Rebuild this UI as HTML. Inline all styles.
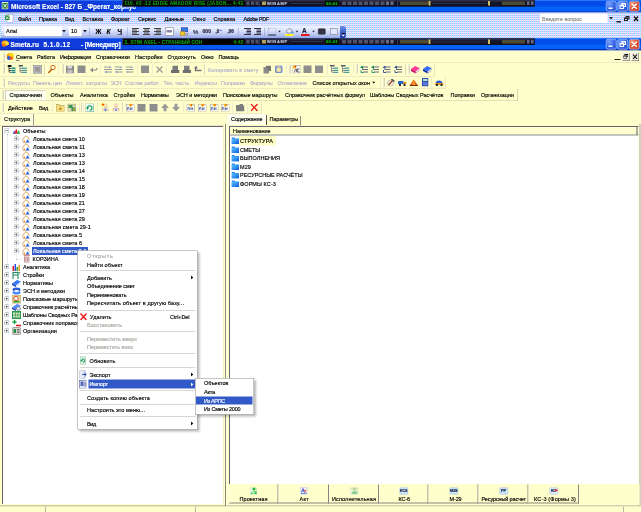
<!DOCTYPE html>
<html><head><meta charset="utf-8"><title>Smeta.ru</title>
<style>
html,body{margin:0;padding:0;background:#ffffcc;overflow:hidden;}
body{width:641px;height:512px;position:relative;}
#root{position:absolute;left:0;top:0;width:1282px;height:1024px;transform:scale(.5);transform-origin:0 0;font-family:"Liberation Sans",sans-serif;overflow:hidden;background:#ffffcc;}
#root div,#root span.t,#root svg{position:absolute;box-sizing:border-box;}
span.t{white-space:pre;-webkit-text-stroke:0.3px currentColor;font-family:"Liberation Sans",sans-serif;}

</style></head><body><div id="root"><div style="left:0px;top:0px;width:1282px;height:25px;background:linear-gradient(90deg,#1236d6 0,#0e3cda 180px,#0650ee 300px,#0458f4 700px,#0458f4 100%);"></div><div style="left:280px;top:2px;width:1002px;height:11px;background:linear-gradient(90deg,rgba(0,30,170,0),rgba(0,30,170,.16) 200px);"></div><div style="left:700px;top:2px;width:582px;height:11px;background:conic-gradient(rgba(0,51,204,.35) 25%,rgba(0,102,255,.35) 0 50%,rgba(0,51,204,.35) 0 75%,rgba(0,102,255,.35) 0) 0 0/4px 4px;"></div><div style="left:280px;top:13px;width:1002px;height:10px;background:linear-gradient(90deg,rgba(0,120,255,0),rgba(0,120,255,.3) 200px);"></div><div style="left:0px;top:0px;width:1282px;height:3px;background:linear-gradient(#3f83ff,rgba(40,110,255,0));"></div><div style="left:0px;top:23px;width:1282px;height:2px;background:#0a2ab0;"></div><svg style="left:3px;top:4px" width="14" height="15" viewBox="0 0 16 17"><rect x="0" y="0" width="16" height="17" fill="#eef8e4"/><rect x="2" y="2" width="12" height="13" fill="#2c8a3c"/><path d="M4.5 4.5 L11.5 12.5 M11.5 4.5 L4.5 12.5" stroke="#fff" stroke-width="2"/><circle cx="12" cy="11" r="1.6" fill="#e04030"/></svg><span class="t" style="left:22px;top:4.5px;font-size:13px;line-height:17px;color:#fff;font-weight:bold;letter-spacing:0.00px;">Microsoft Excel - 827 Б _Фрегат_корпус</span><div style="left:1212px;top:2px;width:21px;height:21px;background:radial-gradient(circle at 30% 25%,#7aa0ff 0,#3a68e8 50%,#2248c8 100%);border:1.5px solid #fff;border-radius:4px;"></div><div style="left:1217px;top:15px;width:8px;height:3px;background:#fff;"></div><div style="left:1235px;top:2px;width:21px;height:21px;background:radial-gradient(circle at 30% 25%,#7aa0ff 0,#3a68e8 50%,#2248c8 100%);border:1.5px solid #fff;border-radius:4px;"></div><div style="left:1243px;top:6px;width:9px;height:8px;border:2px solid #fff;border-top-width:3px;"></div><div style="left:1239px;top:10px;width:9px;height:8px;background:#3a68e8;border:2px solid #fff;border-top-width:3px;"></div><div style="left:1258px;top:2px;width:21px;height:21px;background:radial-gradient(circle at 30% 25%,#f0a080 0,#e0583a 45%,#c43a18 100%);border:1.5px solid #fff;border-radius:4px;"></div><svg style="left:1262px;top:6px" width="13" height="13" viewBox="0 0 13 13"><path d="M2 2 L11 11 M11 2 L2 11" stroke="#fff" stroke-width="2.6" stroke-linecap="round"/></svg><div style="left:0px;top:25px;width:1282px;height:51px;background:conic-gradient(#ffccff 25%,#ccccff 0 50%,#99ccff 0 75%,#ccffff 0) 0 -1px/4px 4px;"></div><div style="left:2px;top:51px;width:690px;height:25px;background:linear-gradient(#f2f5ff 0,#dbe2fc 40%,#bcc8f2 72%,#93a4e2 100%);border-radius:0 4px 4px 0;"></div><div style="left:680px;top:52px;width:12px;height:24px;background:linear-gradient(#6a8ee8,#2038a8);border-radius:0 5px 5px 0;"></div><div style="left:684px;top:66px;width:6px;height:2px;background:#111;"></div><svg style="left:683px;top:69px" width="8" height="5" viewBox="0 0 8 5"><path d="M0 0 L7 0 L3.5 4 Z" fill="#fff"/></svg><svg style="left:10px;top:28px" width="18" height="19" viewBox="0 0 18 19"><rect x="4" y="1" width="12" height="16" fill="#fff" stroke="#8a9ab8"/><rect x="0" y="3" width="9" height="9" fill="#2c8a3c"/><path d="M2 5 L7 10 M7 5 L2 10" stroke="#fff" stroke-width="1.6"/></svg><span class="t" style="left:36px;top:30.5px;font-size:11px;line-height:15px;color:#000;letter-spacing:-0.26px;">Файл</span><span class="t" style="left:78px;top:30.5px;font-size:11px;line-height:15px;color:#000;letter-spacing:-0.20px;">Правка</span><span class="t" style="left:130px;top:30.5px;font-size:11px;line-height:15px;color:#000;letter-spacing:-0.64px;">Вид</span><span class="t" style="left:165px;top:30.5px;font-size:11px;line-height:15px;color:#000;letter-spacing:0.02px;">Вставка</span><span class="t" style="left:222px;top:30.5px;font-size:11px;line-height:15px;color:#000;letter-spacing:-0.18px;">Формат</span><span class="t" style="left:276px;top:30.5px;font-size:11px;line-height:15px;color:#000;letter-spacing:-0.28px;">Сервис</span><span class="t" style="left:329px;top:30.5px;font-size:11px;line-height:15px;color:#000;letter-spacing:-0.12px;">Данные</span><span class="t" style="left:385px;top:30.5px;font-size:11px;line-height:15px;color:#000;letter-spacing:0.11px;">Окно</span><span class="t" style="left:427px;top:30.5px;font-size:11px;line-height:15px;color:#000;letter-spacing:-0.02px;">Справка</span><span class="t" style="left:487px;top:30.5px;font-size:11px;line-height:15px;color:#000;letter-spacing:-0.65px;">Adobe PDF</span><div style="left:1080px;top:27px;width:135px;height:19px;background:#fff;"></div><span class="t" style="left:1084px;top:29.5px;font-size:11px;line-height:15px;color:#8a8a8a;letter-spacing:-0.08px;">Введите вопрос</span><svg style="left:1218px;top:34px" width="9" height="6" viewBox="0 0 9 6"><path d="M0 0 L8 0 L4 5 Z" fill="#222"/></svg><div style="left:1233px;top:42px;width:9px;height:3px;background:#222;"></div><div style="left:1251px;top:32px;width:8px;height:7px;border:2px solid #222;border-top-width:3px;"></div><div style="left:1248px;top:35px;width:8px;height:7px;background:#ccd8fc;border:2px solid #222;border-top-width:3px;"></div><svg style="left:1266px;top:31px" width="13" height="13" viewBox="0 0 13 13"><path d="M2 2 L10 11 M10 2 L2 11" stroke="#111" stroke-width="2.4"/></svg><div style="left:5px;top:56px;width:2px;height:14px;border-left:2px dotted #fff;"></div><div style="left:9px;top:53px;width:115px;height:19px;background:#fff;"></div><span class="t" style="left:12px;top:54.5px;font-size:11px;line-height:15px;color:#000;letter-spacing:-0.00px;">Arial</span><svg style="left:124px;top:60px" width="9" height="6" viewBox="0 0 9 6"><path d="M0 0 L8 0 L4 5 Z" fill="#223"/></svg><div style="left:138px;top:53px;width:25px;height:19px;background:#fff;"></div><span class="t" style="left:142px;top:54.5px;font-size:11px;line-height:15px;color:#000;letter-spacing:-0.12px;">10</span><svg style="left:166px;top:60px" width="9" height="6" viewBox="0 0 9 6"><path d="M0 0 L8 0 L4 5 Z" fill="#223"/></svg><div style="left:178px;top:55px;width:1px;height:18px;background:#8898cc;"></div><span class="t" style="left:191px;top:54.5px;font-size:13px;line-height:17px;color:#000;font-weight:bold;">Ж</span><span class="t" style="left:213px;top:54.5px;font-size:13px;line-height:17px;color:#000;font-weight:bold;font-style:italic;">К</span><span class="t" style="left:235px;top:54.5px;font-size:13px;line-height:17px;color:#000;font-weight:bold;text-decoration:underline;">Ч</span><div style="left:254px;top:55px;width:1px;height:18px;background:#8898cc;"></div><div style="left:264px;top:56px;width:14px;height:2px;background:#444;"></div><div style="left:264px;top:59px;width:10px;height:2px;background:#444;"></div><div style="left:264px;top:62px;width:14px;height:2px;background:#444;"></div><div style="left:264px;top:65px;width:10px;height:2px;background:#444;"></div><div style="left:264px;top:68px;width:14px;height:2px;background:#444;"></div><div style="left:286px;top:56px;width:14px;height:2px;background:#444;"></div><div style="left:288px;top:59px;width:10px;height:2px;background:#444;"></div><div style="left:286px;top:62px;width:14px;height:2px;background:#444;"></div><div style="left:288px;top:65px;width:10px;height:2px;background:#444;"></div><div style="left:286px;top:68px;width:14px;height:2px;background:#444;"></div><div style="left:308px;top:56px;width:14px;height:2px;background:#444;"></div><div style="left:312px;top:59px;width:10px;height:2px;background:#444;"></div><div style="left:308px;top:62px;width:14px;height:2px;background:#444;"></div><div style="left:312px;top:65px;width:10px;height:2px;background:#444;"></div><div style="left:308px;top:68px;width:14px;height:2px;background:#444;"></div><div style="left:330px;top:55px;width:17px;height:16px;background:#fff;border:1px solid #667;"></div><div style="left:333px;top:60px;width:11px;height:5px;background:#88a;"></div><div style="left:362px;top:55px;width:14px;height:9px;background:#3a78e0;border:1px solid #2a4aa0;"></div><div style="left:360px;top:63px;width:10px;height:8px;background:#f0c428;border:1px solid #a8842a;"></div><div style="left:371px;top:66px;width:5px;height:5px;background:#d8d8e8;border:1px solid #667;"></div><span class="t" style="left:386px;top:55.0px;font-size:12px;line-height:16px;color:#223;">%</span><span class="t" style="left:405px;top:56.0px;font-size:10px;line-height:14px;color:#223;font-weight:bold;letter-spacing:0.10px;">000</span><span class="t" style="left:431px;top:56.5px;font-size:9px;line-height:13px;color:#223;font-weight:bold;">,0</span><span class="t" style="left:438px;top:53.0px;font-size:8px;line-height:12px;color:#24c;">←</span><span class="t" style="left:455px;top:56.5px;font-size:9px;line-height:13px;color:#223;font-weight:bold;">,00</span><span class="t" style="left:460px;top:53.0px;font-size:8px;line-height:12px;color:#24c;">→</span><div style="left:477px;top:55px;width:1px;height:18px;background:#8898cc;"></div><div style="left:488px;top:56px;width:14px;height:2px;background:#334;"></div><div style="left:493px;top:59px;width:9px;height:2px;background:#334;"></div><div style="left:493px;top:62px;width:9px;height:2px;background:#334;"></div><div style="left:493px;top:65px;width:9px;height:2px;background:#334;"></div><div style="left:488px;top:68px;width:14px;height:2px;background:#334;"></div><div style="left:508px;top:56px;width:14px;height:2px;background:#334;"></div><div style="left:513px;top:59px;width:9px;height:2px;background:#334;"></div><div style="left:513px;top:62px;width:9px;height:2px;background:#334;"></div><div style="left:513px;top:65px;width:9px;height:2px;background:#334;"></div><div style="left:508px;top:68px;width:14px;height:2px;background:#334;"></div><div style="left:528px;top:55px;width:1px;height:18px;background:#8898cc;"></div><div style="left:536px;top:56px;width:16px;height:15px;border:1px dotted #889;border-bottom:2px solid #223;"></div><svg style="left:556px;top:61px" width="7" height="5" viewBox="0 0 7 5"><path d="M0 0 L6 0 L3 4 Z" fill="#223"/></svg><svg style="left:570px;top:54px" width="18" height="14" viewBox="0 0 18 14"><path d="M2 9 L9 2 L15 8 L8 13 Z" fill="#e8e8f4" stroke="#446"/><circle cx="15" cy="11" r="2" fill="#38c"/></svg><div style="left:570px;top:68px;width:17px;height:4px;background:#ffee22;"></div><svg style="left:591px;top:61px" width="7" height="5" viewBox="0 0 7 5"><path d="M0 0 L6 0 L3 4 Z" fill="#223"/></svg><span class="t" style="left:604px;top:52.5px;font-size:13px;line-height:17px;color:#223;font-weight:bold;">A</span><div style="left:602px;top:68px;width:17px;height:4px;background:#e01818;"></div><svg style="left:624px;top:61px" width="7" height="5" viewBox="0 0 7 5"><path d="M0 0 L6 0 L3 4 Z" fill="#223"/></svg><div style="left:636px;top:57px;width:15px;height:12px;background:#334;border:1px solid #223;border-radius:2px;"></div><div style="left:660px;top:56px;width:15px;height:13px;background:#dfe8ff;border:1px solid #668;"></div><div style="left:0px;top:76px;width:1282px;height:25px;background:linear-gradient(90deg,#1236d6 0,#0e3cda 180px,#0650ee 300px,#0458f4 700px,#0458f4 100%);"></div><div style="left:280px;top:78px;width:1002px;height:11px;background:linear-gradient(90deg,rgba(0,30,170,0),rgba(0,30,170,.16) 200px);"></div><div style="left:700px;top:78px;width:582px;height:11px;background:conic-gradient(rgba(0,51,204,.35) 25%,rgba(0,102,255,.35) 0 50%,rgba(0,51,204,.35) 0 75%,rgba(0,102,255,.35) 0) 0 0/4px 4px;"></div><div style="left:280px;top:89px;width:1002px;height:11px;background:linear-gradient(90deg,rgba(0,120,255,0),rgba(0,120,255,.3) 200px);"></div><div style="left:0px;top:98px;width:1282px;height:3px;background:#0a2ab8;"></div><div style="left:0px;top:76px;width:1282px;height:3px;background:linear-gradient(#3f83ff,rgba(40,110,255,0));"></div><svg style="left:2px;top:80px" width="17" height="15" viewBox="0 0 17 15"><ellipse cx="8" cy="6" rx="7" ry="5" fill="#ffb010"/><ellipse cx="11" cy="7" rx="5" ry="4" fill="#ffd83a"/><ellipse cx="6" cy="10" rx="4" ry="3.5" fill="#ff8000"/></svg><span class="t" style="left:21px;top:80.5px;font-size:13px;line-height:17px;color:#fff;font-weight:bold;letter-spacing:0.17px;">Smeta.ru</span><span class="t" style="left:87px;top:80.5px;font-size:13px;line-height:17px;color:#fff;font-weight:bold;letter-spacing:0.88px;">5.1.0.12</span><span class="t" style="left:162px;top:80.5px;font-size:13px;line-height:17px;color:#fff;font-weight:bold;letter-spacing:-0.27px;">- [Менеджер]</span><div style="left:1212px;top:78px;width:21px;height:21px;background:radial-gradient(circle at 30% 25%,#7aa0ff 0,#3a68e8 50%,#2248c8 100%);border:1.5px solid #fff;border-radius:4px;"></div><div style="left:1217px;top:91px;width:8px;height:3px;background:#fff;"></div><div style="left:1235px;top:78px;width:21px;height:21px;background:radial-gradient(circle at 30% 25%,#7aa0ff 0,#3a68e8 50%,#2248c8 100%);border:1.5px solid #fff;border-radius:4px;"></div><div style="left:1243px;top:82px;width:9px;height:8px;border:2px solid #fff;border-top-width:3px;"></div><div style="left:1239px;top:86px;width:9px;height:8px;background:#3a68e8;border:2px solid #fff;border-top-width:3px;"></div><div style="left:1258px;top:78px;width:21px;height:21px;background:radial-gradient(circle at 30% 25%,#f0a080 0,#e0583a 45%,#c43a18 100%);border:1.5px solid #fff;border-radius:4px;"></div><svg style="left:1262px;top:82px" width="13" height="13" viewBox="0 0 13 13"><path d="M2 2 L11 11 M11 2 L2 11" stroke="#fff" stroke-width="2.6" stroke-linecap="round"/></svg><div style="left:244px;top:0px;width:825px;height:13px;background:#181828;"></div><div style="left:244px;top:0px;width:275px;height:13px;background:linear-gradient(#34344e,#16162a 35%,#101020);border-left:1px solid #50507a;border-right:1px solid #08080e;"></div><div style="left:519px;top:0px;width:275px;height:13px;background:linear-gradient(#34344e,#16162a 35%,#101020);border-left:1px solid #50507a;border-right:1px solid #08080e;"></div><div style="left:794px;top:0px;width:275px;height:13px;background:linear-gradient(#34344e,#16162a 35%,#101020);border-left:1px solid #50507a;border-right:1px solid #08080e;"></div><div style="left:247px;top:1px;width:242px;height:11px;background:#000;"></div><span class="t" style="left:249px;top:0.5px;font-size:9px;line-height:13px;color:#0c9c10;font-weight:bold;letter-spacing:0.73px;">110. #2 -12 EDDIE AMADOR RISE (JASON... 4:43</span><div style="left:493px;top:3px;width:6px;height:7px;background:#50506a;"></div><div style="left:502px;top:3px;width:6px;height:7px;background:#50506a;"></div><div style="left:511px;top:3px;width:6px;height:7px;background:#50506a;"></div><div style="left:524px;top:3px;width:8px;height:7px;background:#b0a060;"></div><span class="t" style="left:534px;top:1.0px;font-size:8px;line-height:12px;color:#c0c0d8;font-weight:bold;letter-spacing:1.45px;">WINAMP</span><div style="left:582px;top:6px;width:64px;height:1px;background:#4a4a6a;"></div><div style="left:650px;top:1px;width:28px;height:11px;background:#001000;"></div><span class="t" style="left:652px;top:1.0px;font-size:8px;line-height:12px;color:#14b418;font-weight:bold;letter-spacing:0.71px;">00:41</span><div style="left:684px;top:3px;width:8px;height:7px;background:#50506a;"></div><div style="left:695px;top:3px;width:8px;height:7px;background:#50506a;"></div><div style="left:706px;top:3px;width:8px;height:7px;background:#50506a;"></div><div style="left:717px;top:3px;width:8px;height:7px;background:#50506a;"></div><div style="left:728px;top:3px;width:8px;height:7px;background:#50506a;"></div><div style="left:739px;top:3px;width:8px;height:7px;background:#50506a;"></div><div style="left:750px;top:3px;width:8px;height:7px;background:#50506a;"></div><div style="left:761px;top:3px;width:8px;height:7px;background:#50506a;"></div><div style="left:772px;top:3px;width:6px;height:7px;background:#6a6a84;"></div><div style="left:781px;top:3px;width:6px;height:7px;background:#6a6a84;"></div><div style="left:800px;top:3px;width:56px;height:7px;background:#4e4a34;"></div><div style="left:857px;top:2px;width:4px;height:9px;background:#d0c060;"></div><div style="left:864px;top:6px;width:110px;height:2px;background:#2c2c46;"></div><div style="left:976px;top:2px;width:4px;height:9px;background:#d0c060;"></div><div style="left:1004px;top:3px;width:46px;height:7px;background:#4e4a34;"></div><div style="left:1054px;top:3px;width:5px;height:7px;background:#6a6a84;"></div><div style="left:1062px;top:3px;width:5px;height:7px;background:#6a6a84;"></div><div style="left:244px;top:77px;width:825px;height:13px;background:#181828;"></div><div style="left:244px;top:77px;width:275px;height:13px;background:linear-gradient(#34344e,#16162a 35%,#101020);border-left:1px solid #50507a;border-right:1px solid #08080e;"></div><div style="left:519px;top:77px;width:275px;height:13px;background:linear-gradient(#34344e,#16162a 35%,#101020);border-left:1px solid #50507a;border-right:1px solid #08080e;"></div><div style="left:794px;top:77px;width:275px;height:13px;background:linear-gradient(#34344e,#16162a 35%,#101020);border-left:1px solid #50507a;border-right:1px solid #08080e;"></div><div style="left:247px;top:78px;width:242px;height:11px;background:#000;"></div><span class="t" style="left:249px;top:77.5px;font-size:9px;line-height:13px;color:#0c9c10;font-weight:bold;letter-spacing:0.60px;">3. STIM AXEL - СТРАННЫЙ СОН                    4:42</span><div style="left:493px;top:80px;width:6px;height:7px;background:#50506a;"></div><div style="left:502px;top:80px;width:6px;height:7px;background:#50506a;"></div><div style="left:511px;top:80px;width:6px;height:7px;background:#50506a;"></div><div style="left:524px;top:80px;width:8px;height:7px;background:#b0a060;"></div><span class="t" style="left:534px;top:78.0px;font-size:8px;line-height:12px;color:#c0c0d8;font-weight:bold;letter-spacing:1.45px;">WINAMP</span><div style="left:582px;top:83px;width:64px;height:1px;background:#4a4a6a;"></div><div style="left:650px;top:78px;width:28px;height:11px;background:#001000;"></div><span class="t" style="left:652px;top:78.0px;font-size:8px;line-height:12px;color:#14b418;font-weight:bold;letter-spacing:0.71px;">00:41</span><div style="left:684px;top:80px;width:8px;height:7px;background:#50506a;"></div><div style="left:695px;top:80px;width:8px;height:7px;background:#50506a;"></div><div style="left:706px;top:80px;width:8px;height:7px;background:#50506a;"></div><div style="left:717px;top:80px;width:8px;height:7px;background:#50506a;"></div><div style="left:728px;top:80px;width:8px;height:7px;background:#50506a;"></div><div style="left:739px;top:80px;width:8px;height:7px;background:#50506a;"></div><div style="left:750px;top:80px;width:8px;height:7px;background:#50506a;"></div><div style="left:761px;top:80px;width:8px;height:7px;background:#50506a;"></div><div style="left:772px;top:80px;width:6px;height:7px;background:#6a6a84;"></div><div style="left:781px;top:80px;width:6px;height:7px;background:#6a6a84;"></div><div style="left:800px;top:80px;width:56px;height:7px;background:#4e4a34;"></div><div style="left:857px;top:79px;width:4px;height:9px;background:#d0c060;"></div><div style="left:864px;top:83px;width:110px;height:2px;background:#2c2c46;"></div><div style="left:976px;top:79px;width:4px;height:9px;background:#d0c060;"></div><div style="left:1004px;top:80px;width:46px;height:7px;background:#4e4a34;"></div><div style="left:1054px;top:80px;width:5px;height:7px;background:#6a6a84;"></div><div style="left:1062px;top:80px;width:5px;height:7px;background:#6a6a84;"></div><div style="left:0px;top:101px;width:1282px;height:923px;background:#ffffcc;"></div><div style="left:6px;top:106px;width:1px;height:18px;background:#b4aa9a;"></div><div style="left:7px;top:106px;width:1px;height:18px;background:#fffff4;"></div><div style="left:9px;top:106px;width:1px;height:18px;background:#b4aa9a;"></div><div style="left:10px;top:106px;width:1px;height:18px;background:#fffff4;"></div><svg style="left:12px;top:104px" width="18" height="18" viewBox="0 0 18 18"><circle cx="8" cy="9" r="7" fill="#ff9a10"/><circle cx="11" cy="7" r="5" fill="#ffd820"/><circle cx="6" cy="12" r="4" fill="#3a62d8"/><circle cx="11" cy="12" r="3" fill="#ff5a10"/></svg><span class="t" style="left:32px;top:106.5px;font-size:11px;line-height:15px;color:#000;letter-spacing:-0.06px;">Смета</span><span class="t" style="left:74px;top:106.5px;font-size:11px;line-height:15px;color:#000;letter-spacing:-0.05px;">Работа</span><span class="t" style="left:120px;top:106.5px;font-size:11px;line-height:15px;color:#000;letter-spacing:-0.54px;">Информация</span><span class="t" style="left:192px;top:106.5px;font-size:11px;line-height:15px;color:#000;letter-spacing:0.12px;">Справочники</span><span class="t" style="left:270px;top:106.5px;font-size:11px;line-height:15px;color:#000;letter-spacing:0.12px;">Настройки</span><span class="t" style="left:335px;top:106.5px;font-size:11px;line-height:15px;color:#000;letter-spacing:0.39px;">Отдохнуть</span><span class="t" style="left:402px;top:106.5px;font-size:11px;line-height:15px;color:#000;letter-spacing:-0.14px;">Окно</span><span class="t" style="left:437px;top:106.5px;font-size:11px;line-height:15px;color:#000;letter-spacing:-0.25px;">Помощь</span><div style="left:32px;top:121px;width:7px;height:1px;background:#000;"></div><div style="left:1229px;top:118px;width:12px;height:2px;background:#222;"></div><div style="left:1244px;top:105px;width:15px;height:17px;background:#ece9d8;border:1px solid #555;border-left-color:#fff;border-top-color:#fff;"></div><div style="left:1249px;top:108px;width:7px;height:6px;border:1px solid #000;border-top-width:2px;"></div><div style="left:1247px;top:111px;width:7px;height:6px;background:#ece9d8;border:1px solid #000;border-top-width:2px;"></div><div style="left:1262px;top:105px;width:16px;height:17px;background:#ece9d8;border:1px solid #555;border-left-color:#fff;border-top-color:#fff;"></div><svg style="left:1265px;top:108px" width="10" height="11" viewBox="0 0 10 11"><path d="M1 1 L9 10 M9 1 L1 10" stroke="#000" stroke-width="2.2"/></svg><div style="left:0px;top:125px;width:1282px;height:1px;background:#e0d2b4;"></div><div style="left:0px;top:152px;width:870px;height:1px;background:#e0d2b4;"></div><div style="left:0px;top:177px;width:892px;height:1px;background:#e0d2b4;"></div><div style="left:0px;top:227px;width:523px;height:1px;background:#e0d2b4;"></div><div style="left:6px;top:129px;width:1px;height:18px;background:#b4aa9a;"></div><div style="left:7px;top:129px;width:1px;height:18px;background:#fffff4;"></div><div style="left:9px;top:129px;width:1px;height:18px;background:#b4aa9a;"></div><div style="left:10px;top:129px;width:1px;height:18px;background:#fffff4;"></div><svg style="left:15px;top:130px" width="17" height="17" viewBox="0 0 17 17"><rect x="0" y="0" width="8" height="4" fill="#111"/><path d="M3 4 V14 M3 7 H8 M3 11 H8 M3 14.5 H8" stroke="#111" stroke-width="1.4" fill="none"/><rect x="8" y="5" width="8" height="3" fill="#1a8a8a"/><rect x="8" y="9.5" width="8" height="3" fill="#1a8a8a"/><rect x="8" y="13.5" width="8" height="3" fill="#1a8a8a"/></svg><svg style="left:37px;top:130px" width="17" height="17" viewBox="0 0 17 17"><rect x="0" y="0" width="9" height="3" fill="#556"/><path d="M3 3 V14 M3 7 H8 M3 11 H8 M3 14.5 H8" stroke="#667" stroke-width="1.4" fill="none"/><rect x="7" y="5" width="10" height="2.5" fill="#4a9a9a"/><rect x="7" y="9.5" width="10" height="2.5" fill="#4a9a9a"/><rect x="7" y="13.5" width="10" height="2.5" fill="#4a9a9a"/></svg><div style="left:60px;top:129px;width:1px;height:20px;background:#bfb296;"></div><div style="left:61px;top:129px;width:1px;height:20px;background:#fffff0;"></div><div style="left:66px;top:130px;width:18px;height:17px;background:#b8b8b8;border:1px solid #999;"></div><div style="left:70px;top:134px;width:10px;height:9px;background:#9a9a9a;"></div><div style="left:89px;top:129px;width:1px;height:20px;background:#bfb296;"></div><div style="left:90px;top:129px;width:1px;height:20px;background:#fffff0;"></div><svg style="left:96px;top:129px" width="16" height="18" viewBox="0 0 16 18"><circle cx="10" cy="6" r="4.5" fill="#fff8e0" stroke="#d86a10" stroke-width="2"/><path d="M7 10 L1.5 16" stroke="#b85a08" stroke-width="3" stroke-linecap="round"/></svg><div style="left:116px;top:129px;width:1px;height:20px;background:#bfb296;"></div><div style="left:117px;top:129px;width:1px;height:20px;background:#fffff0;"></div><div style="left:124px;top:129px;width:1px;height:18px;background:#b4aa9a;"></div><div style="left:125px;top:129px;width:1px;height:18px;background:#fffff4;"></div><div style="left:127px;top:129px;width:1px;height:18px;background:#b4aa9a;"></div><div style="left:128px;top:129px;width:1px;height:18px;background:#fffff4;"></div><svg style="left:132px;top:131px" width="16" height="16" viewBox="0 0 16 16"><rect x="0" y="0" width="16" height="16" fill="#8a8a8a"/><rect x="3" y="1" width="9" height="5" fill="#d8d8d8"/><rect x="3" y="9" width="10" height="7" fill="#c4c4c4"/></svg><div style="left:155px;top:131px;width:16px;height:15px;background:#8e8e8e;"></div><svg style="left:180px;top:131px" width="16" height="16" viewBox="0 0 16 16"><path d="M2 9 H11 Q14 9 14 5" stroke="#8a8a8a" stroke-width="2.4" fill="none"/><path d="M0 9 L6 4 V14 Z" fill="#8a8a8a"/></svg><div style="left:200px;top:129px;width:1px;height:20px;background:#bfb296;"></div><div style="left:201px;top:129px;width:1px;height:20px;background:#fffff0;"></div><svg style="left:208px;top:131px" width="17" height="16" viewBox="0 0 17 16"><path d="M0 3 H9 M0 8 H16 M6 13 H16" stroke="#9a9a9a" stroke-width="2.4"/><path d="M10 1 L16 3.5 L10 6 Z M6 10.5 L0 13 L6 15.5Z" fill="#8a9ac8"/></svg><svg style="left:229px;top:131px" width="17" height="16" viewBox="0 0 17 16"><path d="M0 3 H9 M0 8 H16 M6 13 H16" stroke="#9a9a9a" stroke-width="2.4"/><path d="M10 1 L16 3.5 L10 6 Z M6 10.5 L0 13 L6 15.5Z" fill="#8a9ac8"/></svg><svg style="left:251px;top:131px" width="17" height="16" viewBox="0 0 17 16"><path d="M0 3 H9 M0 8 H16 M6 13 H16" stroke="#9a9a9a" stroke-width="2.4"/><path d="M10 1 L16 3.5 L10 6 Z M6 10.5 L0 13 L6 15.5Z" fill="#8a9ac8"/></svg><div style="left:274px;top:129px;width:1px;height:20px;background:#bfb296;"></div><div style="left:275px;top:129px;width:1px;height:20px;background:#fffff0;"></div><div style="left:282px;top:131px;width:16px;height:15px;background:#8e8e8e;"></div><div style="left:304px;top:129px;width:1px;height:20px;background:#bfb296;"></div><div style="left:305px;top:129px;width:1px;height:20px;background:#fffff0;"></div><svg style="left:312px;top:131px" width="15" height="16" viewBox="0 0 15 16"><path d="M1 2 L13 14 M13 2 L1 14" stroke="#9a9a9a" stroke-width="2.6"/></svg><div style="left:332px;top:129px;width:1px;height:20px;background:#bfb296;"></div><div style="left:333px;top:129px;width:1px;height:20px;background:#fffff0;"></div><svg style="left:342px;top:131px" width="17" height="16" viewBox="0 0 17 16"><rect x="3" y="0" width="11" height="9" fill="#7c7c7c"/><rect x="0" y="9" width="17" height="6" fill="#6e6e6e"/></svg><svg style="left:365px;top:131px" width="17" height="16" viewBox="0 0 17 16"><rect x="3" y="0" width="11" height="9" fill="#7c7c7c"/><rect x="0" y="9" width="17" height="6" fill="#6e6e6e"/></svg><svg style="left:388px;top:131px" width="17" height="16" viewBox="0 0 17 16"><path d="M3 3 V10 H15" stroke="#777" stroke-width="3" fill="none"/><path d="M1 6 L4 0 L8 6Z" fill="#777"/></svg><div style="left:409px;top:129px;width:1px;height:20px;background:#bfb296;"></div><div style="left:410px;top:129px;width:1px;height:20px;background:#fffff0;"></div><span class="t" style="left:416px;top:131.5px;font-size:11px;line-height:15px;color:#b6b3c9;letter-spacing:0.02px;">Копировать в смету</span><svg style="left:527px;top:131px" width="16" height="16" viewBox="0 0 16 16"><rect x="5" y="0" width="10" height="11" fill="#777"/><rect x="0" y="4" width="10" height="12" fill="#8a8a8a" stroke="#666"/></svg><svg style="left:550px;top:130px" width="16" height="17" viewBox="0 0 16 17"><rect x="0" y="1" width="15" height="15" fill="#7090d8" rx="3"/><rect x="4" y="0" width="7" height="4" fill="#c8c8c8"/><rect x="3" y="5" width="9" height="9" fill="#f4e8a8" stroke="#a0a0a0"/></svg><div style="left:572px;top:129px;width:1px;height:20px;background:#bfb296;"></div><div style="left:573px;top:129px;width:1px;height:20px;background:#fffff0;"></div><div style="left:578px;top:129px;width:1px;height:18px;background:#b4aa9a;"></div><div style="left:579px;top:129px;width:1px;height:18px;background:#fffff4;"></div><div style="left:581px;top:129px;width:1px;height:18px;background:#b4aa9a;"></div><div style="left:582px;top:129px;width:1px;height:18px;background:#fffff4;"></div><svg style="left:585px;top:130px" width="17" height="17" viewBox="0 0 17 17"><rect x="0" y="1" width="17" height="15" fill="#f4f4e8" stroke="#999"/><circle cx="4" cy="4" r="3" fill="#ffb000"/><circle cx="6" cy="3" r="1.6" fill="#e01010"/><path d="M4 14 L6 8 H8 V14 M10 8 H14 M10 8 V14 H14" stroke="#334" stroke-width="1.3" fill="none"/></svg><div style="left:607px;top:131px;width:16px;height:15px;background:#8e8e8e;"></div><div style="left:630px;top:131px;width:16px;height:15px;background:#8e8e8e;"></div><div style="left:654px;top:129px;width:1px;height:20px;background:#bfb296;"></div><div style="left:655px;top:129px;width:1px;height:20px;background:#fffff0;"></div><svg style="left:660px;top:130px" width="17" height="17" viewBox="0 0 17 17"><rect x="0" y="0" width="9" height="3" fill="#556"/><path d="M3 3 V14 M3 7 H8 M3 11 H8 M3 14.5 H8" stroke="#667" stroke-width="1.4" fill="none"/><rect x="7" y="5" width="10" height="2.5" fill="#4a9a9a"/><rect x="7" y="9.5" width="10" height="2.5" fill="#4a9a9a"/><rect x="7" y="13.5" width="10" height="2.5" fill="#4a9a9a"/></svg><svg style="left:682px;top:130px" width="17" height="17" viewBox="0 0 17 17"><rect x="0" y="0" width="9" height="3" fill="#556"/><path d="M3 3 V14 M3 7 H8 M3 11 H8 M3 14.5 H8" stroke="#667" stroke-width="1.4" fill="none"/><rect x="7" y="5" width="10" height="2.5" fill="#4a9a9a"/><rect x="7" y="9.5" width="10" height="2.5" fill="#4a9a9a"/><rect x="7" y="13.5" width="10" height="2.5" fill="#4a9a9a"/></svg><div style="left:706px;top:129px;width:1px;height:20px;background:#bfb296;"></div><div style="left:707px;top:129px;width:1px;height:20px;background:#fffff0;"></div><div style="left:712px;top:129px;width:1px;height:18px;background:#b4aa9a;"></div><div style="left:713px;top:129px;width:1px;height:18px;background:#fffff4;"></div><div style="left:715px;top:129px;width:1px;height:18px;background:#b4aa9a;"></div><div style="left:716px;top:129px;width:1px;height:18px;background:#fffff4;"></div><svg style="left:720px;top:131px" width="17" height="16" viewBox="0 0 17 16"><path d="M6 3 H16 M4 8 H16 M6 13 H16" stroke="#667" stroke-width="2"/><path d="M0 3.5 L6 0 V7Z" fill="#128a6a"/><path d="M2 9 V14 H7" stroke="#128a6a" stroke-width="1.8" fill="none"/></svg><svg style="left:742px;top:131px" width="17" height="16" viewBox="0 0 17 16"><path d="M6 3 H16 M4 8 H16 M6 13 H16" stroke="#667" stroke-width="2"/><path d="M0 3.5 L6 0 V7Z" fill="#128a6a"/><path d="M2 9 V14 H7" stroke="#128a6a" stroke-width="1.8" fill="none"/></svg><svg style="left:765px;top:131px" width="17" height="16" viewBox="0 0 17 16"><path d="M6 3 H16 M4 8 H16 M6 13 H16" stroke="#667" stroke-width="2"/><path d="M0 3.5 L6 0 V7Z" fill="#2a4a9a"/><path d="M2 9 V14 H7" stroke="#2a4a9a" stroke-width="1.8" fill="none"/></svg><svg style="left:788px;top:131px" width="17" height="16" viewBox="0 0 17 16"><path d="M6 3 H16 M4 8 H16 M6 13 H16" stroke="#667" stroke-width="2"/><path d="M0 3.5 L6 0 V7Z" fill="#2a4a9a"/><path d="M2 9 V14 H7" stroke="#2a4a9a" stroke-width="1.8" fill="none"/></svg><div style="left:811px;top:129px;width:1px;height:20px;background:#bfb296;"></div><div style="left:812px;top:129px;width:1px;height:20px;background:#fffff0;"></div><div style="left:816px;top:129px;width:1px;height:18px;background:#b4aa9a;"></div><div style="left:817px;top:129px;width:1px;height:18px;background:#fffff4;"></div><div style="left:819px;top:129px;width:1px;height:18px;background:#b4aa9a;"></div><div style="left:820px;top:129px;width:1px;height:18px;background:#fffff4;"></div><svg style="left:822px;top:131px" width="17" height="16" viewBox="0 0 17 16"><path d="M0 7 L8 1 L17 5 L9 12Z" fill="#ff3a9a"/><path d="M0 7 L9 12 V16 L0 11Z" fill="#c01060"/><path d="M9 12 L17 5 V9 L9 16Z" fill="#fff" stroke="#c01060"/></svg><svg style="left:846px;top:131px" width="17" height="16" viewBox="0 0 17 16"><path d="M0 7 L8 1 L17 5 L9 12Z" fill="#3a6aff"/><path d="M0 7 L9 12 V16 L0 11Z" fill="#1030a0"/><path d="M9 12 L17 5 V9 L9 16Z" fill="#fff" stroke="#1030a0"/></svg><div style="left:869px;top:127px;width:1px;height:24px;background:#d8d0a8;"></div><div style="left:6px;top:156px;width:1px;height:18px;background:#b4aa9a;"></div><div style="left:7px;top:156px;width:1px;height:18px;background:#fffff4;"></div><div style="left:9px;top:156px;width:1px;height:18px;background:#b4aa9a;"></div><div style="left:10px;top:156px;width:1px;height:18px;background:#fffff4;"></div><span class="t" style="left:16px;top:157.5px;font-size:11px;line-height:15px;color:#b6b3c9;letter-spacing:0.09px;">Ресурсы</span><span class="t" style="left:66px;top:157.5px;font-size:11px;line-height:15px;color:#b6b3c9;letter-spacing:-0.14px;">Панель цен</span><span class="t" style="left:132px;top:157.5px;font-size:11px;line-height:15px;color:#b6b3c9;letter-spacing:0.36px;">Лимит. затраты</span><span class="t" style="left:221px;top:157.5px;font-size:11px;line-height:15px;color:#b6b3c9;letter-spacing:-0.93px;">ЭСН</span><span class="t" style="left:250px;top:157.5px;font-size:11px;line-height:15px;color:#b6b3c9;letter-spacing:-0.08px;">Состав работ</span><span class="t" style="left:327px;top:157.5px;font-size:11px;line-height:15px;color:#b6b3c9;letter-spacing:0.03px;">Тех. часть</span><span class="t" style="left:389px;top:157.5px;font-size:11px;line-height:15px;color:#b6b3c9;letter-spacing:0.02px;">Индексы</span><span class="t" style="left:442px;top:157.5px;font-size:11px;line-height:15px;color:#b6b3c9;letter-spacing:-0.13px;">Поправки</span><span class="t" style="left:500px;top:157.5px;font-size:11px;line-height:15px;color:#b6b3c9;letter-spacing:-0.41px;">Формулы</span><span class="t" style="left:555px;top:157.5px;font-size:11px;line-height:15px;color:#b6b3c9;letter-spacing:-0.23px;">Оглавление</span><span class="t" style="left:625px;top:157.5px;font-size:11px;line-height:15px;color:#000;letter-spacing:0.04px;">Список открытых окон</span><svg style="left:744px;top:163px" width="8" height="5" viewBox="0 0 8 5"><path d="M0 0 L7 0 L3.5 4Z" fill="#000"/></svg><div style="left:760px;top:155px;width:1px;height:20px;background:#bfb296;"></div><div style="left:761px;top:155px;width:1px;height:20px;background:#fffff0;"></div><div style="left:766px;top:156px;width:1px;height:18px;background:#b4aa9a;"></div><div style="left:767px;top:156px;width:1px;height:18px;background:#fffff4;"></div><div style="left:769px;top:156px;width:1px;height:18px;background:#b4aa9a;"></div><div style="left:770px;top:156px;width:1px;height:18px;background:#fffff4;"></div><svg style="left:774px;top:157px" width="16" height="16" viewBox="0 0 16 16"><circle cx="7" cy="9" r="6" fill="#f4f0e0" stroke="#888"/><path d="M3 13 L12 3" stroke="#a04010" stroke-width="2.4"/><path d="M9 1 L15 6" stroke="#555" stroke-width="3"/></svg><svg style="left:796px;top:157px" width="17" height="16" viewBox="0 0 17 16"><rect x="0" y="5" width="11" height="6" fill="#2a6ad0"/><rect x="11" y="7" width="6" height="4" fill="#e88a10"/><circle cx="4" cy="13" r="2.3" fill="#222"/><circle cx="13" cy="13" r="2.3" fill="#222"/></svg><svg style="left:819px;top:157px" width="17" height="16" viewBox="0 0 17 16"><path d="M8.5 2 L17 14 H0Z" fill="#d85a10"/><path d="M8.5 2 L12 14 H5Z" fill="#ff9a30"/><path d="M0 14 H17" stroke="#803008" stroke-width="2"/></svg><svg style="left:844px;top:156px" width="13" height="17" viewBox="0 0 13 17"><rect x="0" y="0" width="13" height="17" fill="#2a4ab0"/><rect x="2" y="2" width="9" height="4" fill="#b8e8d0"/><rect x="2" y="8" width="9" height="7" fill="#5a7ad8"/></svg><div style="left:862px;top:155px;width:1px;height:20px;background:#bfb296;"></div><div style="left:863px;top:155px;width:1px;height:20px;background:#fffff0;"></div><svg style="left:870px;top:157px" width="17" height="16" viewBox="0 0 17 16"><path d="M1 10 Q2 4 8 4 Q14 4 16 10Z" fill="#2a5ad0"/><rect x="0" y="9" width="17" height="4" fill="#e89a20"/><circle cx="4" cy="13" r="2.3" fill="#222"/><circle cx="13" cy="13" r="2.3" fill="#222"/></svg><div style="left:891px;top:153px;width:1px;height:24px;background:#d8d0a8;"></div><div style="left:4px;top:181px;width:1px;height:18px;background:#b4aa9a;"></div><div style="left:5px;top:181px;width:1px;height:18px;background:#fffff4;"></div><div style="left:7px;top:181px;width:1px;height:18px;background:#b4aa9a;"></div><div style="left:8px;top:181px;width:1px;height:18px;background:#fffff4;"></div><div style="left:10px;top:180px;width:81px;height:21px;background:#fffff0;border:1px solid #b0a890;border-right-color:#fff;border-bottom-color:#fff;"></div><span class="t" style="left:19px;top:182.5px;font-size:11px;line-height:15px;color:#000;letter-spacing:-0.15px;">Справочники</span><span class="t" style="left:101px;top:182.5px;font-size:11px;line-height:15px;color:#000;letter-spacing:0.09px;">Объекты</span><span class="t" style="left:160px;top:182.5px;font-size:11px;line-height:15px;color:#000;letter-spacing:0.17px;">Аналитика</span><span class="t" style="left:227px;top:182.5px;font-size:11px;line-height:15px;color:#000;letter-spacing:0.24px;">Стройки</span><span class="t" style="left:282px;top:182.5px;font-size:11px;line-height:15px;color:#000;letter-spacing:-0.40px;">Нормативы</span><span class="t" style="left:352px;top:182.5px;font-size:11px;line-height:15px;color:#000;letter-spacing:-0.12px;">ЭСН и методики</span><span class="t" style="left:446px;top:182.5px;font-size:11px;line-height:15px;color:#000;letter-spacing:-0.21px;">Поисковые маршруты</span><span class="t" style="left:570px;top:182.5px;font-size:11px;line-height:15px;color:#000;letter-spacing:-0.05px;">Справочник расчётных формул</span><span class="t" style="left:740px;top:182.5px;font-size:11px;line-height:15px;color:#000;letter-spacing:-0.02px;">Шаблоны Сводных Расчётов</span><span class="t" style="left:901px;top:182.5px;font-size:11px;line-height:15px;color:#000;letter-spacing:-0.00px;">Поправки</span><span class="t" style="left:962px;top:182.5px;font-size:11px;line-height:15px;color:#000;letter-spacing:-0.05px;">Организации</span><div style="left:1035px;top:178px;width:1px;height:24px;background:#b8b090;"></div><div style="left:0px;top:201px;width:1036px;height:1px;background:#c8c0a0;"></div><div style="left:4px;top:206px;width:1px;height:18px;background:#b4aa9a;"></div><div style="left:5px;top:206px;width:1px;height:18px;background:#fffff4;"></div><div style="left:7px;top:206px;width:1px;height:18px;background:#b4aa9a;"></div><div style="left:8px;top:206px;width:1px;height:18px;background:#fffff4;"></div><span class="t" style="left:16px;top:207.5px;font-size:11px;line-height:15px;color:#000;letter-spacing:0.21px;">Действие</span><span class="t" style="left:78px;top:207.5px;font-size:11px;line-height:15px;color:#000;letter-spacing:-0.64px;">Вид</span><div style="left:104px;top:205px;width:1px;height:20px;background:#bfb296;"></div><div style="left:105px;top:205px;width:1px;height:20px;background:#fffff0;"></div><svg style="left:112px;top:207px" width="17" height="16" viewBox="0 0 17 16"><path d="M0 2 H7 L8 4 H17 V16 H0Z" fill="#f4dc80" stroke="#8a7a40"/><rect x="6" y="8" width="5" height="5" fill="#c89a30"/></svg><svg style="left:135px;top:207px" width="17" height="16" viewBox="0 0 17 16"><rect x="0" y="1" width="17" height="15" fill="#d8d8a8" stroke="#888"/><rect x="2" y="3" width="8" height="6" fill="#3a9a4a"/><rect x="8" y="8" width="8" height="7" fill="#2a8a6a"/><circle cx="13" cy="12" r="2.2" fill="#ffb000"/></svg><div style="left:158px;top:205px;width:1px;height:20px;background:#bfb296;"></div><div style="left:159px;top:205px;width:1px;height:20px;background:#fffff0;"></div><div style="left:163px;top:206px;width:1px;height:18px;background:#b4aa9a;"></div><div style="left:164px;top:206px;width:1px;height:18px;background:#fffff4;"></div><div style="left:166px;top:206px;width:1px;height:18px;background:#b4aa9a;"></div><div style="left:167px;top:206px;width:1px;height:18px;background:#fffff4;"></div><svg style="left:171px;top:207px" width="17" height="17" viewBox="0 0 17 17"><rect x="0.5" y="0.5" width="16" height="16" fill="#eefaf6" stroke="#5aa0a0"/><path d="M4 9 A4.5 4.5 0 1 1 8.5 13.5" stroke="#109a50" stroke-width="2.4" fill="none"/><path d="M1 8 L4 13 L7 8Z" fill="#109a50"/></svg><div style="left:194px;top:205px;width:1px;height:20px;background:#bfb296;"></div><div style="left:195px;top:205px;width:1px;height:20px;background:#fffff0;"></div><svg style="left:202px;top:206px" width="16" height="17" viewBox="0 0 16 17"><circle cx="9" cy="5" r="3" fill="#fff4d8" stroke="#c8a050"/><path d="M3 16 Q3 9 9 9 Q15 9 15 16Z" fill="#fffbe8" stroke="#c8a050"/><rect x="7" y="11" width="4" height="5" fill="#5a7ae0"/><circle cx="3.5" cy="3.5" r="3" fill="#ffc000"/><circle cx="4.5" cy="3" r="1.5" fill="#e82020"/></svg><svg style="left:224px;top:206px" width="16" height="17" viewBox="0 0 16 17"><circle cx="8" cy="4.5" r="3" fill="#fff0e0" stroke="#d09080"/><path d="M2 16 Q2 9 8 9 Q14 9 14 16Z" fill="#fff4ec" stroke="#d09080"/><rect x="6" y="11" width="4" height="5" fill="#7a9af0"/><path d="M2 13 L5 10 M14 13 L11 10" stroke="#e06060" stroke-width="1.2"/></svg><div style="left:245px;top:205px;width:1px;height:20px;background:#bfb296;"></div><div style="left:246px;top:205px;width:1px;height:20px;background:#fffff0;"></div><svg style="left:252px;top:207px" width="17" height="16" viewBox="0 0 17 16"><rect x="0.5" y="2.5" width="16" height="13" fill="#f6f6ee" stroke="#8e8e92"/><path d="M3 13 V8 H6 V13 M9 8 V13 M9 10.5 H12 M12 8 V13" stroke="#3a4a9a" stroke-width="1.3" fill="none"/><circle cx="9" cy="3.5" r="2.8" fill="#ffc400"/><circle cx="10" cy="3" r="1.4" fill="#e82020"/></svg><div style="left:275px;top:208px;width:16px;height:15px;background:#8e8e8e;"></div><div style="left:299px;top:208px;width:16px;height:15px;background:#8e8e8e;"></div><svg style="left:322px;top:207px" width="16" height="16" viewBox="0 0 16 16"><path d="M8 0 L16 9 H11 V16 H5 V9 H0Z" fill="#9a9a9a"/></svg><svg style="left:344px;top:207px" width="16" height="16" viewBox="0 0 16 16"><path d="M8 16 L16 7 H11 V0 H5 V7 H0Z" fill="#9a9a9a"/></svg><div style="left:366px;top:205px;width:1px;height:20px;background:#bfb296;"></div><div style="left:367px;top:205px;width:1px;height:20px;background:#fffff0;"></div><svg style="left:373px;top:207px" width="17" height="16" viewBox="0 0 17 16"><rect x="0.5" y="2.5" width="16" height="13" fill="#f6f6ee" stroke="#8e8e92"/><path d="M3 13 V8 H6 V13 M9 8 V13 M9 10.5 H12 M12 8 V13" stroke="#3a4a9a" stroke-width="1.3" fill="none"/><circle cx="9" cy="3.5" r="2.8" fill="#ffc400"/><circle cx="10" cy="3" r="1.4" fill="#e82020"/></svg><svg style="left:396px;top:207px" width="17" height="16" viewBox="0 0 17 16"><rect x="0.5" y="2.5" width="16" height="13" fill="#f6f6ee" stroke="#8e8e92"/><path d="M3 13 V8 H6 V13 M9 8 V13 M9 10.5 H12 M12 8 V13" stroke="#3a4a9a" stroke-width="1.3" fill="none"/><circle cx="9" cy="3.5" r="2.8" fill="#ffc400"/><circle cx="10" cy="3" r="1.4" fill="#e82020"/></svg><svg style="left:420px;top:207px" width="17" height="16" viewBox="0 0 17 16"><rect x="0.5" y="2.5" width="16" height="13" fill="#f6f6ee" stroke="#8e8e92"/><path d="M3 13 V8 H6 V13 M9 8 V13 M9 10.5 H12 M12 8 V13" stroke="#3a4a9a" stroke-width="1.3" fill="none"/><circle cx="9" cy="3.5" r="2.8" fill="#ffc400"/><circle cx="10" cy="3" r="1.4" fill="#e82020"/></svg><svg style="left:442px;top:207px" width="17" height="16" viewBox="0 0 17 16"><rect x="0.5" y="2.5" width="16" height="13" fill="#f6f6ee" stroke="#8e8e92"/><path d="M3 13 V8 H6 V13 M9 8 V13 M9 10.5 H12 M12 8 V13" stroke="#3a4a9a" stroke-width="1.3" fill="none"/><circle cx="9" cy="3.5" r="2.8" fill="#ffc400"/><circle cx="10" cy="3" r="1.4" fill="#e82020"/></svg><div style="left:464px;top:205px;width:1px;height:20px;background:#bfb296;"></div><div style="left:465px;top:205px;width:1px;height:20px;background:#fffff0;"></div><svg style="left:472px;top:207px" width="17" height="16" viewBox="0 0 17 16"><path d="M0 3 H6 L8 1 H14 V4 H17 V16 H0Z" fill="#7c7c7c"/></svg><div style="left:494px;top:205px;width:1px;height:20px;background:#bfb296;"></div><div style="left:495px;top:205px;width:1px;height:20px;background:#fffff0;"></div><svg style="left:501px;top:207px" width="16" height="16" viewBox="0 0 16 16"><path d="M1 1 L14 15 M14 1 L1 15" stroke="#f01818" stroke-width="2.6"/></svg><div style="left:522px;top:203px;width:1px;height:24px;background:#d8d0a8;"></div><div style="left:4px;top:229px;width:62px;height:22px;background:#ffffdc;border-top:1px solid #fffff4;border-left:1px solid #fffff4;"></div><div style="left:66px;top:228px;width:2px;height:23px;background:#9a9a90;"></div><span class="t" style="left:8px;top:230.5px;font-size:11px;line-height:15px;color:#000;letter-spacing:-0.02px;">Структура</span><div style="left:0px;top:250px;width:448px;height:1px;background:#d8c8b0;"></div><div style="left:455px;top:228px;width:77px;height:21px;background:#fffff0;"></div><span class="t" style="left:462px;top:230.5px;font-size:11px;line-height:15px;color:#000;letter-spacing:-0.13px;">Содержание</span><div style="left:532px;top:230px;width:2px;height:20px;background:#505048;"></div><span class="t" style="left:539px;top:230.5px;font-size:11px;line-height:15px;color:#000;letter-spacing:-0.18px;">Параметры</span><div style="left:600px;top:232px;width:2px;height:19px;background:#8a8a80;"></div><div style="left:4px;top:252px;width:442px;height:756px;background:#fff;border-top:2px solid #66666c;border-left:2px solid #66666c;"></div><div style="left:446px;top:252px;width:1px;height:756px;background:#e8e0c0;"></div><div style="left:450px;top:248px;width:2px;height:764px;background:#8a8a86;"></div><div style="left:455px;top:250px;width:1px;height:718px;background:#fffff6;"></div><div style="left:458px;top:252px;width:2px;height:716px;background:#66666c;"></div><div style="left:460px;top:252px;width:817px;height:716px;background:#fff;border-top:2px solid #66666c;"></div><div style="left:1279px;top:248px;width:2px;height:764px;background:#a0a8a8;"></div><div style="left:460px;top:254px;width:817px;height:16px;background:#ffffd0;"></div><div style="left:460px;top:269px;width:817px;height:2px;background:#8a9090;"></div><div style="left:1273px;top:254px;width:2px;height:16px;background:#5a5a60;"></div><span class="t" style="left:466px;top:253.5px;font-size:11px;line-height:15px;color:#000;letter-spacing:-0.11px;">Наименование</span><div style="left:478px;top:272px;width:74px;height:19px;background:#ffffc4;"></div><svg style="left:463px;top:274px" width="15" height="14" viewBox="0 0 15 14"><defs><linearGradient id="fg" x1="0" y1="0" x2="1" y2="1"><stop offset="0" stop-color="#58c8ff"/><stop offset="1" stop-color="#0a58e0"/></linearGradient></defs><path d="M0 1 H6 L7 3 H15 V14 H0Z" fill="#2a90f0"/><path d="M0 4 H15 V14 H0Z" fill="url(#fg)"/></svg><span class="t" style="left:480px;top:273.5px;font-size:11px;line-height:15px;color:#000;letter-spacing:0.40px;">СТРУКТУРА</span><svg style="left:463px;top:292px" width="15" height="14" viewBox="0 0 15 14"><defs><linearGradient id="fg" x1="0" y1="0" x2="1" y2="1"><stop offset="0" stop-color="#58c8ff"/><stop offset="1" stop-color="#0a58e0"/></linearGradient></defs><path d="M0 1 H6 L7 3 H15 V14 H0Z" fill="#2a90f0"/><path d="M0 4 H15 V14 H0Z" fill="url(#fg)"/></svg><span class="t" style="left:480px;top:291.5px;font-size:11px;line-height:15px;color:#000;letter-spacing:-0.16px;">СМЕТЫ</span><svg style="left:463px;top:309px" width="15" height="14" viewBox="0 0 15 14"><defs><linearGradient id="fg" x1="0" y1="0" x2="1" y2="1"><stop offset="0" stop-color="#58c8ff"/><stop offset="1" stop-color="#0a58e0"/></linearGradient></defs><path d="M0 1 H6 L7 3 H15 V14 H0Z" fill="#2a90f0"/><path d="M0 4 H15 V14 H0Z" fill="url(#fg)"/></svg><span class="t" style="left:480px;top:308.5px;font-size:11px;line-height:15px;color:#000;letter-spacing:0.03px;">ВЫПОЛНЕНИЯ</span><svg style="left:463px;top:326px" width="15" height="14" viewBox="0 0 15 14"><defs><linearGradient id="fg" x1="0" y1="0" x2="1" y2="1"><stop offset="0" stop-color="#58c8ff"/><stop offset="1" stop-color="#0a58e0"/></linearGradient></defs><path d="M0 1 H6 L7 3 H15 V14 H0Z" fill="#2a90f0"/><path d="M0 4 H15 V14 H0Z" fill="url(#fg)"/></svg><span class="t" style="left:480px;top:325.5px;font-size:11px;line-height:15px;color:#000;letter-spacing:0.20px;">М29</span><svg style="left:463px;top:343px" width="15" height="14" viewBox="0 0 15 14"><defs><linearGradient id="fg" x1="0" y1="0" x2="1" y2="1"><stop offset="0" stop-color="#58c8ff"/><stop offset="1" stop-color="#0a58e0"/></linearGradient></defs><path d="M0 1 H6 L7 3 H15 V14 H0Z" fill="#2a90f0"/><path d="M0 4 H15 V14 H0Z" fill="url(#fg)"/></svg><span class="t" style="left:480px;top:342.5px;font-size:11px;line-height:15px;color:#000;letter-spacing:0.01px;">РЕСУРСНЫЕ РАСЧЁТЫ</span><svg style="left:463px;top:360px" width="15" height="14" viewBox="0 0 15 14"><defs><linearGradient id="fg" x1="0" y1="0" x2="1" y2="1"><stop offset="0" stop-color="#58c8ff"/><stop offset="1" stop-color="#0a58e0"/></linearGradient></defs><path d="M0 1 H6 L7 3 H15 V14 H0Z" fill="#2a90f0"/><path d="M0 4 H15 V14 H0Z" fill="url(#fg)"/></svg><span class="t" style="left:480px;top:359.5px;font-size:11px;line-height:15px;color:#000;letter-spacing:0.19px;">ФОРМЫ КС-3</span><div style="left:14px;top:268px;width:1px;height:394px;border-left:1px dotted #b0b0b0;"></div><div style="left:32px;top:270px;width:1px;height:248px;border-left:1px dotted #b0b0b0;"></div><div style="left:9px;top:257px;width:9px;height:9px;background:#fff;border:1px solid #a4aec0;"></div><div style="left:11px;top:261px;width:5px;height:1px;background:#222;"></div><svg style="left:25px;top:257px" width="16" height="11" viewBox="0 0 17 13"><path d="M0 12 L3 5 L7 12Z" fill="#2a4ae8"/><path d="M3 12 L8 0 L13 12Z" fill="#f02028"/><path d="M10 12 L13.5 3 L17 12Z" fill="#20c840"/><path d="M0 12 H17" stroke="#446" stroke-width="1"/></svg><span class="t" style="left:46px;top:254.5px;font-size:11px;line-height:15px;color:#000;letter-spacing:-0.05px;">Объекты</span><div style="left:37px;top:278px;width:7px;height:1px;border-top:1px dotted #b0b0b0;"></div><div style="left:28px;top:273px;width:9px;height:9px;background:#fff;border:1px solid #a4aec0;"></div><div style="left:30px;top:277px;width:5px;height:1px;background:#222;"></div><div style="left:32px;top:275px;width:1px;height:5px;background:#222;"></div><svg style="left:43px;top:270px" width="18" height="16" viewBox="0 0 18 16"><path d="M3 15 V7 L9 1.5 L15 7 V15Z" fill="#fffdf4" stroke="#9a9488" stroke-width="1"/><path d="M2 8 L9 1.5 L16 8" stroke="#eca040" stroke-width="1.3" fill="none"/><path d="M8 15 L12 8.5 L16 15Z" fill="#3a6af0"/><circle cx="5.5" cy="13" r="1.8" fill="#ff9a10"/></svg><span class="t" style="left:66px;top:270.5px;font-size:11px;line-height:15px;color:#000;letter-spacing:0.05px;">Локальная смета 10</span><div style="left:37px;top:294px;width:7px;height:1px;border-top:1px dotted #b0b0b0;"></div><div style="left:28px;top:289px;width:9px;height:9px;background:#fff;border:1px solid #a4aec0;"></div><div style="left:30px;top:293px;width:5px;height:1px;background:#222;"></div><div style="left:32px;top:291px;width:1px;height:5px;background:#222;"></div><svg style="left:43px;top:286px" width="18" height="16" viewBox="0 0 18 16"><path d="M3 15 V7 L9 1.5 L15 7 V15Z" fill="#fffdf4" stroke="#9a9488" stroke-width="1"/><path d="M2 8 L9 1.5 L16 8" stroke="#eca040" stroke-width="1.3" fill="none"/><path d="M8 15 L12 8.5 L16 15Z" fill="#3a6af0"/><circle cx="5.5" cy="13" r="1.8" fill="#ff9a10"/></svg><span class="t" style="left:66px;top:286.5px;font-size:11px;line-height:15px;color:#000;letter-spacing:0.10px;">Локальная смета 11</span><div style="left:37px;top:310px;width:7px;height:1px;border-top:1px dotted #b0b0b0;"></div><div style="left:28px;top:305px;width:9px;height:9px;background:#fff;border:1px solid #a4aec0;"></div><div style="left:30px;top:309px;width:5px;height:1px;background:#222;"></div><div style="left:32px;top:307px;width:1px;height:5px;background:#222;"></div><svg style="left:43px;top:302px" width="18" height="16" viewBox="0 0 18 16"><path d="M3 15 V7 L9 1.5 L15 7 V15Z" fill="#fffdf4" stroke="#9a9488" stroke-width="1"/><path d="M2 8 L9 1.5 L16 8" stroke="#eca040" stroke-width="1.3" fill="none"/><path d="M8 15 L12 8.5 L16 15Z" fill="#3a6af0"/><circle cx="5.5" cy="13" r="1.8" fill="#ff9a10"/></svg><span class="t" style="left:66px;top:302.5px;font-size:11px;line-height:15px;color:#000;letter-spacing:0.05px;">Локальная смета 13</span><div style="left:37px;top:326px;width:7px;height:1px;border-top:1px dotted #b0b0b0;"></div><div style="left:28px;top:321px;width:9px;height:9px;background:#fff;border:1px solid #a4aec0;"></div><div style="left:30px;top:325px;width:5px;height:1px;background:#222;"></div><div style="left:32px;top:323px;width:1px;height:5px;background:#222;"></div><svg style="left:43px;top:318px" width="18" height="16" viewBox="0 0 18 16"><path d="M3 15 V7 L9 1.5 L15 7 V15Z" fill="#fffdf4" stroke="#9a9488" stroke-width="1"/><path d="M2 8 L9 1.5 L16 8" stroke="#eca040" stroke-width="1.3" fill="none"/><path d="M8 15 L12 8.5 L16 15Z" fill="#3a6af0"/><circle cx="5.5" cy="13" r="1.8" fill="#ff9a10"/></svg><span class="t" style="left:66px;top:318.5px;font-size:11px;line-height:15px;color:#000;letter-spacing:0.05px;">Локальная смета 13</span><div style="left:37px;top:342px;width:7px;height:1px;border-top:1px dotted #b0b0b0;"></div><div style="left:28px;top:337px;width:9px;height:9px;background:#fff;border:1px solid #a4aec0;"></div><div style="left:30px;top:341px;width:5px;height:1px;background:#222;"></div><div style="left:32px;top:339px;width:1px;height:5px;background:#222;"></div><svg style="left:43px;top:334px" width="18" height="16" viewBox="0 0 18 16"><path d="M3 15 V7 L9 1.5 L15 7 V15Z" fill="#fffdf4" stroke="#9a9488" stroke-width="1"/><path d="M2 8 L9 1.5 L16 8" stroke="#eca040" stroke-width="1.3" fill="none"/><path d="M8 15 L12 8.5 L16 15Z" fill="#3a6af0"/><circle cx="5.5" cy="13" r="1.8" fill="#ff9a10"/></svg><span class="t" style="left:66px;top:334.5px;font-size:11px;line-height:15px;color:#000;letter-spacing:0.05px;">Локальная смета 14</span><div style="left:37px;top:358px;width:7px;height:1px;border-top:1px dotted #b0b0b0;"></div><div style="left:28px;top:353px;width:9px;height:9px;background:#fff;border:1px solid #a4aec0;"></div><div style="left:30px;top:357px;width:5px;height:1px;background:#222;"></div><div style="left:32px;top:355px;width:1px;height:5px;background:#222;"></div><svg style="left:43px;top:350px" width="18" height="16" viewBox="0 0 18 16"><path d="M3 15 V7 L9 1.5 L15 7 V15Z" fill="#fffdf4" stroke="#9a9488" stroke-width="1"/><path d="M2 8 L9 1.5 L16 8" stroke="#eca040" stroke-width="1.3" fill="none"/><path d="M8 15 L12 8.5 L16 15Z" fill="#3a6af0"/><circle cx="5.5" cy="13" r="1.8" fill="#ff9a10"/></svg><span class="t" style="left:66px;top:350.5px;font-size:11px;line-height:15px;color:#000;letter-spacing:0.05px;">Локальная смета 15</span><div style="left:37px;top:374px;width:7px;height:1px;border-top:1px dotted #b0b0b0;"></div><div style="left:28px;top:369px;width:9px;height:9px;background:#fff;border:1px solid #a4aec0;"></div><div style="left:30px;top:373px;width:5px;height:1px;background:#222;"></div><div style="left:32px;top:371px;width:1px;height:5px;background:#222;"></div><svg style="left:43px;top:366px" width="18" height="16" viewBox="0 0 18 16"><path d="M3 15 V7 L9 1.5 L15 7 V15Z" fill="#fffdf4" stroke="#9a9488" stroke-width="1"/><path d="M2 8 L9 1.5 L16 8" stroke="#eca040" stroke-width="1.3" fill="none"/><path d="M8 15 L12 8.5 L16 15Z" fill="#3a6af0"/><circle cx="5.5" cy="13" r="1.8" fill="#ff9a10"/></svg><span class="t" style="left:66px;top:366.5px;font-size:11px;line-height:15px;color:#000;letter-spacing:0.05px;">Локальная смета 18</span><div style="left:37px;top:390px;width:7px;height:1px;border-top:1px dotted #b0b0b0;"></div><div style="left:28px;top:385px;width:9px;height:9px;background:#fff;border:1px solid #a4aec0;"></div><div style="left:30px;top:389px;width:5px;height:1px;background:#222;"></div><div style="left:32px;top:387px;width:1px;height:5px;background:#222;"></div><svg style="left:43px;top:382px" width="18" height="16" viewBox="0 0 18 16"><path d="M3 15 V7 L9 1.5 L15 7 V15Z" fill="#fffdf4" stroke="#9a9488" stroke-width="1"/><path d="M2 8 L9 1.5 L16 8" stroke="#eca040" stroke-width="1.3" fill="none"/><path d="M8 15 L12 8.5 L16 15Z" fill="#3a6af0"/><circle cx="5.5" cy="13" r="1.8" fill="#ff9a10"/></svg><span class="t" style="left:66px;top:382.5px;font-size:11px;line-height:15px;color:#000;letter-spacing:0.05px;">Локальная смета 19</span><div style="left:37px;top:406px;width:7px;height:1px;border-top:1px dotted #b0b0b0;"></div><div style="left:28px;top:401px;width:9px;height:9px;background:#fff;border:1px solid #a4aec0;"></div><div style="left:30px;top:405px;width:5px;height:1px;background:#222;"></div><div style="left:32px;top:403px;width:1px;height:5px;background:#222;"></div><svg style="left:43px;top:398px" width="18" height="16" viewBox="0 0 18 16"><path d="M3 15 V7 L9 1.5 L15 7 V15Z" fill="#fffdf4" stroke="#9a9488" stroke-width="1"/><path d="M2 8 L9 1.5 L16 8" stroke="#eca040" stroke-width="1.3" fill="none"/><path d="M8 15 L12 8.5 L16 15Z" fill="#3a6af0"/><circle cx="5.5" cy="13" r="1.8" fill="#ff9a10"/></svg><span class="t" style="left:66px;top:398.5px;font-size:11px;line-height:15px;color:#000;letter-spacing:0.05px;">Локальная смета 21</span><div style="left:37px;top:422px;width:7px;height:1px;border-top:1px dotted #b0b0b0;"></div><div style="left:28px;top:417px;width:9px;height:9px;background:#fff;border:1px solid #a4aec0;"></div><div style="left:30px;top:421px;width:5px;height:1px;background:#222;"></div><div style="left:32px;top:419px;width:1px;height:5px;background:#222;"></div><svg style="left:43px;top:414px" width="18" height="16" viewBox="0 0 18 16"><path d="M3 15 V7 L9 1.5 L15 7 V15Z" fill="#fffdf4" stroke="#9a9488" stroke-width="1"/><path d="M2 8 L9 1.5 L16 8" stroke="#eca040" stroke-width="1.3" fill="none"/><path d="M8 15 L12 8.5 L16 15Z" fill="#3a6af0"/><circle cx="5.5" cy="13" r="1.8" fill="#ff9a10"/></svg><span class="t" style="left:66px;top:414.5px;font-size:11px;line-height:15px;color:#000;letter-spacing:0.05px;">Локальная смета 27</span><div style="left:37px;top:438px;width:7px;height:1px;border-top:1px dotted #b0b0b0;"></div><div style="left:28px;top:433px;width:9px;height:9px;background:#fff;border:1px solid #a4aec0;"></div><div style="left:30px;top:437px;width:5px;height:1px;background:#222;"></div><div style="left:32px;top:435px;width:1px;height:5px;background:#222;"></div><svg style="left:43px;top:430px" width="18" height="16" viewBox="0 0 18 16"><path d="M3 15 V7 L9 1.5 L15 7 V15Z" fill="#fffdf4" stroke="#9a9488" stroke-width="1"/><path d="M2 8 L9 1.5 L16 8" stroke="#eca040" stroke-width="1.3" fill="none"/><path d="M8 15 L12 8.5 L16 15Z" fill="#3a6af0"/><circle cx="5.5" cy="13" r="1.8" fill="#ff9a10"/></svg><span class="t" style="left:66px;top:430.5px;font-size:11px;line-height:15px;color:#000;letter-spacing:0.05px;">Локальная смета 29</span><div style="left:37px;top:454px;width:7px;height:1px;border-top:1px dotted #b0b0b0;"></div><div style="left:28px;top:449px;width:9px;height:9px;background:#fff;border:1px solid #a4aec0;"></div><div style="left:30px;top:453px;width:5px;height:1px;background:#222;"></div><div style="left:32px;top:451px;width:1px;height:5px;background:#222;"></div><svg style="left:43px;top:446px" width="18" height="16" viewBox="0 0 18 16"><path d="M3 15 V7 L9 1.5 L15 7 V15Z" fill="#fffdf4" stroke="#9a9488" stroke-width="1"/><path d="M2 8 L9 1.5 L16 8" stroke="#eca040" stroke-width="1.3" fill="none"/><path d="M8 15 L12 8.5 L16 15Z" fill="#3a6af0"/><circle cx="5.5" cy="13" r="1.8" fill="#ff9a10"/></svg><span class="t" style="left:66px;top:446.5px;font-size:11px;line-height:15px;color:#000;letter-spacing:0.16px;">Локальная смета 29-1</span><div style="left:37px;top:470px;width:7px;height:1px;border-top:1px dotted #b0b0b0;"></div><div style="left:28px;top:465px;width:9px;height:9px;background:#fff;border:1px solid #a4aec0;"></div><div style="left:30px;top:469px;width:5px;height:1px;background:#222;"></div><div style="left:32px;top:467px;width:1px;height:5px;background:#222;"></div><svg style="left:43px;top:462px" width="18" height="16" viewBox="0 0 18 16"><path d="M3 15 V7 L9 1.5 L15 7 V15Z" fill="#fffdf4" stroke="#9a9488" stroke-width="1"/><path d="M2 8 L9 1.5 L16 8" stroke="#eca040" stroke-width="1.3" fill="none"/><path d="M8 15 L12 8.5 L16 15Z" fill="#3a6af0"/><circle cx="5.5" cy="13" r="1.8" fill="#ff9a10"/></svg><span class="t" style="left:66px;top:462.5px;font-size:11px;line-height:15px;color:#000;letter-spacing:0.07px;">Локальная смета 5</span><div style="left:37px;top:486px;width:7px;height:1px;border-top:1px dotted #b0b0b0;"></div><div style="left:28px;top:481px;width:9px;height:9px;background:#fff;border:1px solid #a4aec0;"></div><div style="left:30px;top:485px;width:5px;height:1px;background:#222;"></div><div style="left:32px;top:483px;width:1px;height:5px;background:#222;"></div><svg style="left:43px;top:478px" width="18" height="16" viewBox="0 0 18 16"><path d="M3 15 V7 L9 1.5 L15 7 V15Z" fill="#fffdf4" stroke="#9a9488" stroke-width="1"/><path d="M2 8 L9 1.5 L16 8" stroke="#eca040" stroke-width="1.3" fill="none"/><path d="M8 15 L12 8.5 L16 15Z" fill="#3a6af0"/><circle cx="5.5" cy="13" r="1.8" fill="#ff9a10"/></svg><span class="t" style="left:66px;top:478.5px;font-size:11px;line-height:15px;color:#000;letter-spacing:0.07px;">Локальная смета 6</span><div style="left:37px;top:502px;width:7px;height:1px;border-top:1px dotted #b0b0b0;"></div><div style="left:28px;top:497px;width:9px;height:9px;background:#fff;border:1px solid #a4aec0;"></div><div style="left:30px;top:501px;width:5px;height:1px;background:#222;"></div><div style="left:32px;top:499px;width:1px;height:5px;background:#222;"></div><svg style="left:43px;top:494px" width="18" height="16" viewBox="0 0 18 16"><path d="M3 15 V7 L9 1.5 L15 7 V15Z" fill="#fffdf4" stroke="#9a9488" stroke-width="1"/><path d="M2 8 L9 1.5 L16 8" stroke="#eca040" stroke-width="1.3" fill="none"/><path d="M8 15 L12 8.5 L16 15Z" fill="#3a6af0"/><circle cx="5.5" cy="13" r="1.8" fill="#ff9a10"/></svg><div style="left:64px;top:494px;width:112px;height:16px;background:#3259c8;"></div><span class="t" style="left:66px;top:494.5px;font-size:11px;line-height:15px;color:#fff;letter-spacing:0.02px;">Локальная смета 8-1</span><div style="left:32px;top:518px;width:14px;height:1px;border-top:1px dotted #b0b0b0;"></div><svg style="left:47px;top:511px" width="13" height="14" viewBox="0 0 13 14"><path d="M0 0 H13" stroke="#b02020" stroke-width="2.4"/><rect x="2" y="3" width="9" height="11" fill="#e8e8e8" stroke="#a03030"/><path d="M5 5 V12 M8 5 V12" stroke="#a03030"/></svg><span class="t" style="left:65px;top:510.5px;font-size:11px;line-height:15px;color:#000;letter-spacing:0.03px;">КОРЗИНА</span><div style="left:9px;top:529px;width:9px;height:9px;background:#fff;border:1px solid #a4aec0;"></div><div style="left:11px;top:533px;width:5px;height:1px;background:#222;"></div><div style="left:13px;top:531px;width:1px;height:5px;background:#222;"></div><svg style="left:24px;top:526px" width="17" height="16" viewBox="0 0 17 16"><rect x="1" y="6" width="3" height="10" fill="#e02020"/><rect x="5" y="2" width="3" height="14" fill="#2a4ae0"/><rect x="9" y="8" width="3" height="8" fill="#20a040"/><rect x="13" y="4" width="3" height="12" fill="#e8a010"/></svg><span class="t" style="left:46px;top:526.5px;font-size:11px;line-height:15px;color:#000;letter-spacing:-0.05px;">Аналитика</span><div style="left:9px;top:545px;width:9px;height:9px;background:#fff;border:1px solid #a4aec0;"></div><div style="left:11px;top:549px;width:5px;height:1px;background:#222;"></div><div style="left:13px;top:547px;width:1px;height:5px;background:#222;"></div><svg style="left:24px;top:542px" width="17" height="16" viewBox="0 0 17 16"><path d="M2 16 V3 H12 V16 M2 8 H12" stroke="#1a8a5a" stroke-width="2.2" fill="none"/><path d="M12 3 H16 V7" stroke="#777" stroke-width="1.6" fill="none"/></svg><span class="t" style="left:46px;top:542.5px;font-size:11px;line-height:15px;color:#000;letter-spacing:-0.05px;">Стройки</span><div style="left:9px;top:561px;width:9px;height:9px;background:#fff;border:1px solid #a4aec0;"></div><div style="left:11px;top:565px;width:5px;height:1px;background:#222;"></div><div style="left:13px;top:563px;width:1px;height:5px;background:#222;"></div><svg style="left:24px;top:558px" width="18" height="16" viewBox="0 0 18 16"><path d="M0 9 L10 2 L18 5 L8 13Z" fill="#3a7aff"/><path d="M0 9 L8 13 V16 L0 12Z" fill="#1a3ab0"/><path d="M8 13 L18 5 V8 L8 16Z" fill="#dfe8ff"/></svg><span class="t" style="left:46px;top:558.5px;font-size:11px;line-height:15px;color:#000;letter-spacing:0.16px;">Нормативы</span><div style="left:9px;top:577px;width:9px;height:9px;background:#fff;border:1px solid #a4aec0;"></div><div style="left:11px;top:581px;width:5px;height:1px;background:#222;"></div><div style="left:13px;top:579px;width:1px;height:5px;background:#222;"></div><svg style="left:24px;top:574px" width="18" height="16" viewBox="0 0 18 16"><ellipse cx="9" cy="5" rx="8" ry="4" fill="#2a5ad8"/><ellipse cx="9" cy="11" rx="8" ry="4" fill="#4a8aff"/><ellipse cx="9" cy="8" rx="5" ry="2" fill="#fff"/></svg><span class="t" style="left:46px;top:574.5px;font-size:11px;line-height:15px;color:#000;letter-spacing:0.02px;">ЭСН и методики</span><div style="left:9px;top:593px;width:9px;height:9px;background:#fff;border:1px solid #a4aec0;"></div><div style="left:11px;top:597px;width:5px;height:1px;background:#222;"></div><div style="left:13px;top:595px;width:1px;height:5px;background:#222;"></div><svg style="left:24px;top:590px" width="18" height="17" viewBox="0 0 18 17"><rect x="0" y="0" width="18" height="17" fill="#e8d8a0" stroke="#a08030"/><circle cx="8" cy="7" r="4.5" fill="#fff" stroke="#d04010" stroke-width="1.8"/><rect x="3" y="12" width="12" height="3" fill="#30a040"/></svg><span class="t" style="left:46px;top:590.5px;font-size:11px;line-height:15px;color:#000;letter-spacing:-0.04px;">Поисковые маршруты</span><div style="left:9px;top:609px;width:9px;height:9px;background:#fff;border:1px solid #a4aec0;"></div><div style="left:11px;top:613px;width:5px;height:1px;background:#222;"></div><div style="left:13px;top:611px;width:1px;height:5px;background:#222;"></div><svg style="left:24px;top:606px" width="18" height="16" viewBox="0 0 18 16"><path d="M0 9 L10 2 L18 5 L8 13Z" fill="#5a8aff"/><path d="M0 9 L8 13 V16 L0 12Z" fill="#1a3ab0"/><circle cx="13" cy="11" r="4" fill="#d8e0f0" stroke="#456"/></svg><span class="t" style="left:46px;top:606.5px;font-size:11px;line-height:15px;color:#000;letter-spacing:-0.03px;">Справочник расчётных</span><div style="left:9px;top:625px;width:9px;height:9px;background:#fff;border:1px solid #a4aec0;"></div><div style="left:11px;top:629px;width:5px;height:1px;background:#222;"></div><div style="left:13px;top:627px;width:1px;height:5px;background:#222;"></div><svg style="left:24px;top:622px" width="18" height="16" viewBox="0 0 18 16"><rect x="0" y="0" width="18" height="16" fill="#2a9a4a"/><rect x="2" y="3" width="14" height="10" fill="#c8e8c0"/><path d="M2 8 H16 M7 3 V13 M12 3 V13" stroke="#2a7a3a"/></svg><span class="t" style="left:46px;top:622.5px;font-size:11px;line-height:15px;color:#000;letter-spacing:-0.24px;">Шаблоны Сводных Ра</span><div style="left:9px;top:641px;width:9px;height:9px;background:#fff;border:1px solid #a4aec0;"></div><div style="left:11px;top:645px;width:5px;height:1px;background:#222;"></div><div style="left:13px;top:643px;width:1px;height:5px;background:#222;"></div><svg style="left:24px;top:638px" width="18" height="16" viewBox="0 0 18 16"><path d="M1 6 H9 M5 2 V10" stroke="#10a040" stroke-width="2.6"/><path d="M8 13 H18" stroke="#e01818" stroke-width="3"/></svg><span class="t" style="left:46px;top:638.5px;font-size:11px;line-height:15px;color:#000;letter-spacing:0.13px;">Справочник поправок</span><div style="left:9px;top:657px;width:9px;height:9px;background:#fff;border:1px solid #a4aec0;"></div><div style="left:11px;top:661px;width:5px;height:1px;background:#222;"></div><div style="left:13px;top:659px;width:1px;height:5px;background:#222;"></div><svg style="left:24px;top:654px" width="18" height="16" viewBox="0 0 18 16"><rect x="0" y="1" width="18" height="14" rx="3" fill="#d8d8d0" stroke="#555"/><rect x="3" y="4" width="5" height="8" fill="#2a8a4a"/><path d="M10 5 H15 M10 8 H15 M10 11 H15" stroke="#444" stroke-width="1.4"/></svg><span class="t" style="left:46px;top:654.5px;font-size:11px;line-height:15px;color:#000;letter-spacing:0.13px;">Организации</span><div style="left:453px;top:968px;width:826px;height:43px;background:#ffffcc;"></div><div style="left:458px;top:969px;width:99px;height:38px;border-right:2px solid #85857e;border-bottom:2px solid #85857e;border-left:1px solid #fffff4;"></div><svg style="left:500px;top:974px" width="15" height="15" viewBox="0 0 15 15"><rect x="0" y="2" width="13" height="13" fill="#f4fff0" stroke="#9ac8a0"/><circle cx="8" cy="4" r="3.2" fill="#28b838"/><path d="M2 14 Q3 7 8 8 Q13 7 14 14Z" fill="#30c848"/><rect x="5" y="9" width="4" height="4" fill="#fff"/></svg><span class="t" style="left:479px;top:989.5px;font-size:11px;line-height:15px;color:#000;letter-spacing:0.18px;">Проектная</span><div style="left:557px;top:969px;width:101px;height:38px;border-right:2px solid #85857e;border-bottom:2px solid #85857e;border-left:1px solid #fffff4;"></div><svg style="left:600px;top:974px" width="15" height="15" viewBox="0 0 15 15"><rect x="0" y="0" width="15" height="15" fill="#f4f6ff" stroke="#90a0d0"/><path d="M3 11 L6 3 L9 11 M4 8 H8" stroke="#2a3ab0" stroke-width="1.5" fill="none"/><path d="M10 5 V11 M10 8 L13 5 M10 8 L13 11" stroke="#c03030" stroke-width="1.3" fill="none"/><path d="M2 13 H13" stroke="#3a6ad8" stroke-width="1.5"/></svg><span class="t" style="left:599px;top:989.5px;font-size:11px;line-height:15px;color:#000;letter-spacing:0.56px;">Акт</span><div style="left:658px;top:969px;width:100px;height:38px;border-right:2px solid #85857e;border-bottom:2px solid #85857e;border-left:1px solid #fffff4;"></div><svg style="left:701px;top:974px" width="15" height="15" viewBox="0 0 15 15"><rect x="0" y="2" width="14" height="13" fill="#eef6e8" stroke="#a8c8a8"/><circle cx="8" cy="4" r="3" fill="#a8d8a8"/><path d="M2 14 Q3 7 8 8 Q13 7 14 14Z" fill="#90d098"/><path d="M3 3 L6 6 M12 2 L10 5" stroke="#e8c020" stroke-width="1.4"/></svg><span class="t" style="left:664px;top:989.5px;font-size:11px;line-height:15px;color:#000;letter-spacing:0.23px;">Исполнительная</span><div style="left:758px;top:969px;width:99px;height:38px;border-right:2px solid #85857e;border-bottom:2px solid #85857e;border-left:1px solid #fffff4;"></div><div style="left:799px;top:975px;width:17px;height:14px;background:#cfe4ff;border:1px solid #9ab8e0;border-radius:2px;"></div><span class="t" style="left:800px;top:976.0px;font-size:8px;line-height:12px;color:#123;font-weight:bold;letter-spacing:-0.01px;">КС6</span><span class="t" style="left:797px;top:989.5px;font-size:11px;line-height:15px;color:#000;letter-spacing:-0.25px;">КС-6</span><div style="left:857px;top:969px;width:100px;height:38px;border-right:2px solid #85857e;border-bottom:2px solid #85857e;border-left:1px solid #fffff4;"></div><div style="left:899px;top:975px;width:17px;height:14px;background:#cfe4ff;border:1px solid #9ab8e0;border-radius:2px;"></div><span class="t" style="left:900px;top:976.0px;font-size:8px;line-height:12px;color:#123;font-weight:bold;letter-spacing:-0.19px;">М29</span><span class="t" style="left:899px;top:989.5px;font-size:11px;line-height:15px;color:#000;letter-spacing:-0.27px;">М-29</span><div style="left:957px;top:969px;width:100px;height:38px;border-right:2px solid #85857e;border-bottom:2px solid #85857e;border-left:1px solid #fffff4;"></div><div style="left:999px;top:975px;width:17px;height:14px;background:#cfe4ff;border:1px solid #9ab8e0;border-radius:2px;"></div><span class="t" style="left:1002px;top:976.0px;font-size:8px;line-height:12px;color:#123;font-weight:bold;letter-spacing:-0.34px;">РР</span><span class="t" style="left:963px;top:989.5px;font-size:11px;line-height:15px;color:#000;letter-spacing:-0.24px;">Ресурсный расчет</span><div style="left:1057px;top:969px;width:101px;height:38px;border-right:2px solid #85857e;border-bottom:2px solid #85857e;border-left:1px solid #fffff4;"></div><div style="left:1099px;top:975px;width:17px;height:14px;background:#e4ecff;border:1px solid #9ab8e0;border-radius:2px;"></div><span class="t" style="left:1102px;top:976.0px;font-size:8px;line-height:12px;color:#123;font-weight:bold;letter-spacing:-0.28px;">КС</span><div style="left:1110px;top:978px;width:5px;height:5px;background:#e04040;border-radius:3px;"></div><span class="t" style="left:1068px;top:989.5px;font-size:11px;line-height:15px;color:#000;letter-spacing:0.31px;">КС-3 (Формы 3)</span><div style="left:0px;top:1011px;width:452px;height:2px;background:#9a9690;"></div><div style="left:452px;top:1011px;width:828px;height:2px;background:#a8a8a0;"></div><div style="left:0px;top:1013px;width:1282px;height:11px;background:#ffffcc;"></div><div style="left:90px;top:1014px;width:2px;height:10px;background:#b8b4a0;"></div><div style="left:390px;top:1014px;width:2px;height:10px;background:#b8b4a0;"></div><div style="left:1246px;top:1014px;width:2px;height:10px;background:#b8b4a0;"></div><div style="left:159px;top:505px;width:240px;height:358px;background:rgba(0,0,0,.28);filter:blur(2px);"></div><div style="left:155px;top:501px;width:240px;height:358px;background:#fff;border:1px solid #8a8a84;"></div><span class="t" style="left:174px;top:504.0px;font-size:11px;line-height:15px;color:#a9a9a2;letter-spacing:1.40px;">Открыть</span><span class="t" style="left:174px;top:521.5px;font-size:11px;line-height:15px;color:#000;letter-spacing:0.13px;">Найти объект</span><div style="left:160px;top:541px;width:231px;height:1px;background:#b4aca0;"></div><span class="t" style="left:174px;top:547.5px;font-size:11px;line-height:15px;color:#000;letter-spacing:0.17px;">Добавить</span><svg style="left:382px;top:551px" width="5" height="8" viewBox="0 0 5 8"><path d="M0 0 L4.5 4 L0 8Z" fill="#000"/></svg><span class="t" style="left:174px;top:564.5px;font-size:11px;line-height:15px;color:#000;letter-spacing:-0.08px;">Объединение смет</span><span class="t" style="left:174px;top:582.0px;font-size:11px;line-height:15px;color:#000;letter-spacing:-0.13px;">Переименовать</span><span class="t" style="left:174px;top:599.0px;font-size:11px;line-height:15px;color:#000;letter-spacing:0.28px;">Пересчитать объект в другую базу...</span><div style="left:160px;top:620px;width:231px;height:1px;background:#b4aca0;"></div><svg style="left:160px;top:626px" width="15" height="15" viewBox="0 0 15 15"><path d="M1 1 L13 14 M13 1 L1 14" stroke="#f01010" stroke-width="2.6"/></svg><span class="t" style="left:180px;top:626.5px;font-size:11px;line-height:15px;color:#000;letter-spacing:0.14px;">Удалить</span><span class="t" style="left:340px;top:626.5px;font-size:11px;line-height:15px;color:#000;letter-spacing:-0.13px;">Ctrl+Del</span><span class="t" style="left:174px;top:643.0px;font-size:11px;line-height:15px;color:#a9a9a2;letter-spacing:-0.04px;">Восстановить</span><div style="left:160px;top:663px;width:231px;height:1px;background:#b4aca0;"></div><span class="t" style="left:174px;top:670.5px;font-size:11px;line-height:15px;color:#a9a9a2;letter-spacing:0.02px;">Переместить вверх</span><span class="t" style="left:174px;top:687.0px;font-size:11px;line-height:15px;color:#a9a9a2;letter-spacing:-0.10px;">Переместить вниз</span><div style="left:160px;top:706px;width:231px;height:1px;background:#b4aca0;"></div><svg style="left:160px;top:713px" width="12" height="16" viewBox="0 0 12 16"><rect x="0" y="0" width="12" height="16" fill="#d8f0e0" stroke="#6a9a7a"/><path d="M3 8 A3.2 3.2 0 1 1 6 11.5" stroke="#109a50" stroke-width="2" fill="none"/><path d="M0.5 7 L3 11 L5.5 7Z" fill="#109a50"/></svg><span class="t" style="left:179px;top:713.5px;font-size:11px;line-height:15px;color:#000;letter-spacing:0.27px;">Обновить</span><div style="left:160px;top:734px;width:231px;height:1px;background:#b4aca0;"></div><svg style="left:159px;top:741px" width="14" height="16" viewBox="0 0 14 16"><rect x="0" y="0" width="11" height="16" fill="#e8ecf8" stroke="#5a6a9a"/><path d="M5 8 H13 M10 5 L14 8 L10 11" stroke="#2a4ab0" stroke-width="1.8" fill="none"/></svg><span class="t" style="left:179px;top:741.5px;font-size:11px;line-height:15px;color:#000;letter-spacing:0.09px;">Экспорт</span><svg style="left:382px;top:745px" width="5" height="8" viewBox="0 0 5 8"><path d="M0 0 L4.5 4 L0 8Z" fill="#000"/></svg><div style="left:177px;top:759px;width:214px;height:18px;background:#3259c8;"></div><svg style="left:158px;top:760px" width="15" height="17" viewBox="0 0 15 17"><rect x="0.5" y="0.5" width="14" height="16" fill="#dfe4f4" stroke="#3a4a8a"/><rect x="3" y="3" width="6" height="9" fill="#5a6ab8"/><path d="M12 4 V13" stroke="#2a3a8a" stroke-width="1.6"/></svg><span class="t" style="left:179px;top:761.0px;font-size:11px;line-height:15px;color:#fff;letter-spacing:-0.24px;">Импорт</span><svg style="left:382px;top:764.5px" width="5" height="8" viewBox="0 0 5 8"><path d="M0 0 L4.5 4 L0 8Z" fill="#fff"/></svg><div style="left:160px;top:780px;width:231px;height:1px;background:#b4aca0;"></div><span class="t" style="left:174px;top:788.5px;font-size:11px;line-height:15px;color:#000;letter-spacing:0.27px;">Создать копию объекта</span><div style="left:160px;top:808px;width:231px;height:1px;background:#b4aca0;"></div><span class="t" style="left:174px;top:813.0px;font-size:11px;line-height:15px;color:#000;letter-spacing:0.12px;">Настроить это меню...</span><div style="left:160px;top:833px;width:231px;height:1px;background:#b4aca0;"></div><span class="t" style="left:174px;top:839.5px;font-size:11px;line-height:15px;color:#000;letter-spacing:-0.64px;">Вид</span><svg style="left:382px;top:843px" width="5" height="8" viewBox="0 0 5 8"><path d="M0 0 L4.5 4 L0 8Z" fill="#000"/></svg><div style="left:394px;top:760px;width:118px;height:73px;background:rgba(0,0,0,.28);filter:blur(2px);"></div><div style="left:390px;top:756px;width:118px;height:73px;background:#fff;border:1px solid #8a8a84;"></div><span class="t" style="left:408px;top:759.0px;font-size:11px;line-height:15px;color:#000;letter-spacing:-0.04px;">Объектов</span><span class="t" style="left:408px;top:776.5px;font-size:11px;line-height:15px;color:#000;letter-spacing:-0.33px;">Акта</span><div style="left:392px;top:793px;width:113px;height:16px;background:#3259c8;"></div><span class="t" style="left:408px;top:793.5px;font-size:11px;line-height:15px;color:#fff;letter-spacing:-0.65px;">Из АРПС</span><span class="t" style="left:408px;top:810.5px;font-size:11px;line-height:15px;color:#000;letter-spacing:-0.37px;">Из Сметы 2000</span></div></body></html>
